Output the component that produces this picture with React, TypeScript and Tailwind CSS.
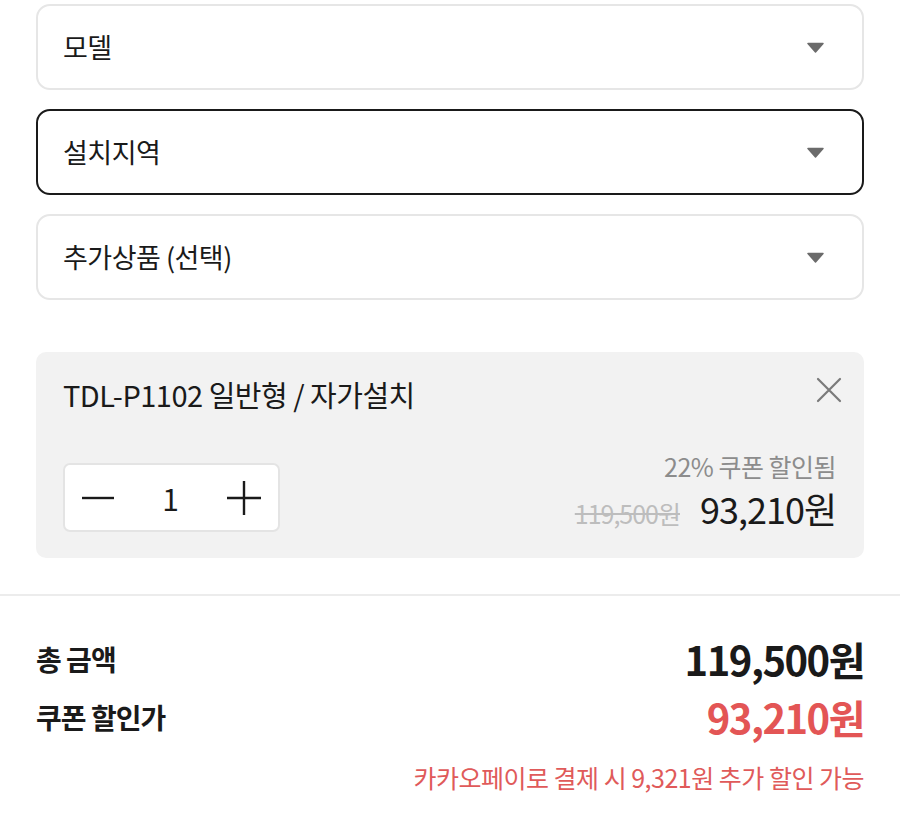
import React from 'react';

const font = { fontFamily: '"Noto Sans CJK KR", "Noto Sans", sans-serif' };

const Caret = () => (
  <svg width="17" height="11" viewBox="0 0 17 11" className="shrink-0">
    <path d="M1 1.5h15L8.5 10z" fill="#6b6b6b" stroke="#6b6b6b" strokeWidth="1.5" strokeLinejoin="round" />
  </svg>
);

interface SelectBoxProps {
  label: string;
  active?: boolean;
}

const SelectBox: React.FC<SelectBoxProps> = ({ label, active }) => (
  <div
    className={`h-[86px] rounded-[14px] border-2 bg-white flex items-center justify-between pl-[25px] pr-[38px] ${
      active ? 'border-[#1a1a1a]' : 'border-[#e6e6e6]'
    }`}
  >
    <span className="text-[27px] text-[#1a1a1a] tracking-[-0.5px]">{label}</span>
    <Caret />
  </div>
);

export default function App() {
  return (
    <div className="w-[900px] h-[820px] bg-white overflow-hidden" style={font}>
      <div className="px-9 pt-[4px]">
        {/* option selects */}
        <div className="flex flex-col gap-[19px]">
          <SelectBox label="모델" />
          <SelectBox label="설치지역" active />
          <SelectBox label="추가상품 (선택)" />
        </div>

        {/* selected item card */}
        <div className="mt-[52px] h-[206px] rounded-[10px] bg-[#f2f2f2] pl-[27px] pr-[28px] pt-[20px] pb-[26px] flex flex-col justify-between">
          <div className="flex items-start justify-between">
            <span className="text-[29px] text-[#1a1a1a] tracking-[-0.5px] leading-[44px]">TDL-P1102 일반형 / 자가설치</span>
            <svg width="26" height="26" viewBox="0 0 26 26" className="mt-[5px] mr-[-6px]">
              <path d="M2 2l22 22M24 2L2 24" stroke="#7a7a7a" strokeWidth="2.2" strokeLinecap="round" />
            </svg>
          </div>
          <div className="flex items-end justify-between">
            <div className="w-[217px] h-[69px] bg-white border-2 border-[#e4e4e4] rounded-[7px] flex items-center justify-between px-[16px]">
              <svg width="34" height="34" viewBox="0 0 34 34">
                <path d="M1 17h32" stroke="#1a1a1a" strokeWidth="2.4" />
              </svg>
              <span className="text-[30px] leading-none text-[#1a1a1a]">1</span>
              <svg width="36" height="36" viewBox="0 0 36 36">
                <path d="M1 18h34M18 1v34" stroke="#1a1a1a" strokeWidth="2.4" />
              </svg>
            </div>
            <div className="flex flex-col items-end mb-[-4px]">
              <span className="text-[25px] text-[#8c8c8c] tracking-[-0.5px] leading-[38px]">22% 쿠폰 할인됨</span>
              <div className="flex items-baseline gap-[20px] leading-[46px]">
                <span className="text-[25px] text-[#bdbdbd] line-through tracking-[-1px]">119,500원</span>
                <span className="text-[36px] text-[#1a1a1a] tracking-[-1px]">93,210원</span>
              </div>
            </div>
          </div>
        </div>
      </div>

      {/* divider */}
      <div className="mt-[36px] h-[2px] bg-[#ececec]" />

      {/* totals */}
      <div className="px-9 pt-[35px]">
        <div className="flex items-center justify-between h-[56px]">
          <span className="text-[28px] font-bold text-[#1a1a1a] tracking-[-1px]">총 금액</span>
          <span className="text-[40px] font-bold text-[#1a1a1a] tracking-[-1.5px]">119,500원</span>
        </div>
        <div className="flex items-center justify-between h-[60px]">
          <span className="text-[28px] font-bold text-[#1a1a1a] tracking-[-1px]">쿠폰 할인가</span>
          <span className="text-[40px] font-bold text-[#e35555] tracking-[-1.5px]">93,210원</span>
        </div>
        <div className="mt-[12px] flex justify-end">
          <span className="text-[25px] text-[#e05a5a] tracking-[-0.5px]">카카오페이로 결제 시 9,321원 추가 할인 가능</span>
        </div>
      </div>
    </div>
  );
}
